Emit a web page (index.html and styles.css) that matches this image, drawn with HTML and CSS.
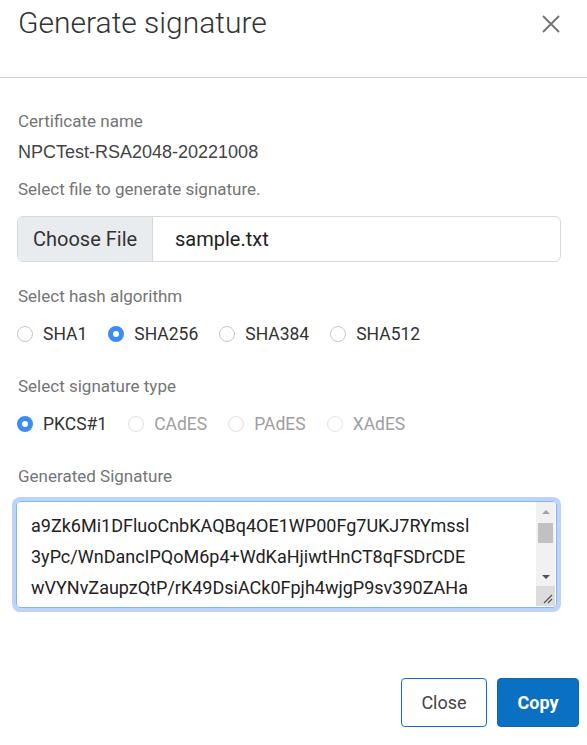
FILE: index.html
```html
<!DOCTYPE html>
<html lang="en">
<head>
    <meta charset="UTF-8">
    <meta name="viewport" content="width=device-width, initial-scale=1.0">
    <title>Generate signature</title>
    <link rel="stylesheet" href="styles.css">
</head>
<body>
    <div class="modal">
        <div class="modal-header">
            <h1 class="modal-title">Generate signature</h1>
            <button type="button" class="btn-close" aria-label="Close">
                <svg width="18" height="18" viewBox="0 0 18 18">
                    <path d="M1 1L17 17M17 1L1 17" stroke="#777" stroke-width="2" fill="none"/>
                </svg>
            </button>
        </div>

        <div class="modal-body">
            <div class="field">
                <div class="field-label">Certificate name</div>
                <div class="cert-name">NPCTest-RSA2048-20221008</div>
            </div>

            <div class="field">
                <label class="field-label" for="file">Select file to generate signature.</label>
                <div class="file-input" id="file">
                    <span class="file-btn">Choose File</span>
                    <span class="file-name">sample.txt</span>
                </div>
            </div>

            <div class="field field-wide">
                <div class="field-label">Select hash algorithm</div>
                <div class="radio-row">
                    <label class="radio"><input type="radio" name="hash" value="SHA1"> SHA1</label>
                    <label class="radio"><input type="radio" name="hash" value="SHA256" checked> SHA256</label>
                    <label class="radio"><input type="radio" name="hash" value="SHA384"> SHA384</label>
                    <label class="radio"><input type="radio" name="hash" value="SHA512"> SHA512</label>
                </div>
            </div>

            <div class="field field-wide">
                <div class="field-label">Select signature type</div>
                <div class="radio-row">
                    <label class="radio"><input type="radio" name="sigtype" value="PKCS1" checked> PKCS#1</label>
                    <label class="radio disabled"><input type="radio" name="sigtype" value="CAdES" disabled> CAdES</label>
                    <label class="radio disabled"><input type="radio" name="sigtype" value="PAdES" disabled> PAdES</label>
                    <label class="radio disabled"><input type="radio" name="sigtype" value="XAdES" disabled> XAdES</label>
                </div>
            </div>

            <div class="field field-wide">
                <label class="field-label" for="signature">Generated Signature</label>
                <div class="signature-wrap">
                    <textarea id="signature" class="signature" readonly>a9Zk6Mi1DFluoCnbKAQBq4OE1WP00Fg7UKJ7RYmssl
3yPc/WnDancIPQoM6p4+WdKaHjiwtHnCT8qFSDrCDE
wVYNvZaupzQtP/rK49DsiACk0Fpjh4wjgP9sv390ZAHa
kuyqtbcpqzgrm+qfnmepqhsgqpcmyhqgnpmqsmgnq
Xb2Jm8Qf0LwT5sHc7Ue1RkN3yPa9GdVz4MiOq6BtEw
Fh8Ls2Kc5Nv0Yp7Rj1Ta9Dw3Gm4Hb6Zx2Qe==</textarea>
                    <!-- scrollbar drawn by hand, the headless browser hides the native one -->
                    <div class="scrollbar">
                        <div class="sb-btn"><span class="arrow-up"></span></div>
                        <div class="sb-track"><div class="sb-thumb"></div></div>
                        <div class="sb-btn"><span class="arrow-down"></span></div>
                        <div class="sb-corner">
                            <svg width="19" height="20" viewBox="0 0 19 20">
                                <path d="M8 17L16 9M12 17L16 13" stroke="#555" stroke-width="1.2" fill="none"/>
                            </svg>
                        </div>
                    </div>
                </div>
            </div>
        </div>

        <div class="modal-footer">
            <button type="button" class="btn btn-outline">Close</button>
            <button type="button" class="btn btn-primary">Copy</button>
        </div>
    </div>
</body>
</html>
```

FILE: styles.css
```css
body {
    margin: 0;
    background-color: #fff;
    font-family: Roboto, "Liberation Sans", sans-serif;
    color: #333;
}

.modal {
    width: 587px;
    height: 745px;
    display: flex;
    flex-direction: column;
}

.modal-header {
    display: flex;
    justify-content: space-between;
    align-items: flex-start;
    padding: 5px 27px 36px 18px;
    border-bottom: 1px solid #d0d0d0;
}

.modal-title {
    margin: 0;
    font-size: 30px;
    font-weight: 300;
    line-height: 36px;
    color: #333;
}

.btn-close {
    background: none;
    border: none;
    padding: 0;
    margin-top: 10px;
    width: 18px;
    height: 18px;
    cursor: pointer;
}

.btn-close svg {
    display: block;
}

.modal-body {
    padding: 31px 26px 0 16px;
    flex: 1;
}

.field {
    margin-bottom: 13px;
}

.field-wide {
    margin-top: 22px;
}

.field-wide + .field-wide {
    margin-top: 28px;
}

.field-label {
    display: block;
    padding-left: 2px;
    font-size: 17px;
    line-height: 24px;
    color: #757575;
}

.cert-name {
    padding-left: 2px;
    margin-top: 7px;
    font-family: "Liberation Sans", Arial, sans-serif;
    font-size: 18px;
    line-height: 24px;
    color: #444;
}

.file-input {
    display: flex;
    margin-top: 15px;
    margin-left: 1px;
    height: 46px;
    border: 1px solid #d6d9dd;
    border-radius: 6px;
    overflow: hidden;
    box-sizing: border-box;
    font-size: 20px;
}

.file-btn {
    display: flex;
    align-items: center;
    padding: 0 0 0 15px;
    width: 135px;
    box-sizing: border-box;
    white-space: nowrap;
    background-color: #e9ecef;
    border-right: 1px solid #d6d9dd;
    color: #333;
}

.file-name {
    display: flex;
    align-items: center;
    padding-left: 22px;
    color: #222;
}

.radio-row {
    display: flex;
    gap: 21px;
    margin-top: 14px;
    padding-left: 1px;
    height: 24px;
}

.radio {
    display: flex;
    align-items: center;
    gap: 10px;
    font-size: 17.5px;
    color: #333;
}

.radio.disabled {
    color: #a0a0a0;
}

.radio input {
    appearance: none;
    -webkit-appearance: none;
    margin: 0;
    width: 16px;
    height: 16px;
    border: 1px solid #c8c8c8;
    border-radius: 50%;
    background-color: #fff;
}

.radio input:checked {
    border: 5px solid #3b8cf6;
}

.radio input:disabled {
    border-color: #e2e2e2;
}

.signature-wrap {
    position: relative;
    margin-top: 13px;
    width: 541px;
    height: 107px;
    border-radius: 4px;
    box-shadow: 0 0 0 4px #bcd4f8;
}

.signature {
    display: block;
    width: 100%;
    height: 100%;
    box-sizing: border-box;
    padding: 8px 22px 0 14px;
    font-family: Roboto, "Liberation Sans", sans-serif;
    font-size: 18px;
    line-height: 31px;
    color: #222;
    border: 1px solid #8ab4f0;
    border-radius: 4px;
    outline: none;
    resize: none;
    overflow: hidden;
    white-space: pre;
}

.scrollbar {
    position: absolute;
    top: 1px;
    right: 2px;
    bottom: 2px;
    width: 19px;
    display: flex;
    flex-direction: column;
    background-color: #f1f1f1;
}

.sb-btn {
    height: 19px;
    display: flex;
    align-items: center;
    justify-content: center;
}

.arrow-up {
    border-left: 4px solid transparent;
    border-right: 4px solid transparent;
    border-bottom: 4px solid #a3a3a3;
}

.arrow-down {
    border-left: 4px solid transparent;
    border-right: 4px solid transparent;
    border-top: 4px solid #505050;
}

.sb-track {
    flex: 1;
    padding: 2px 2px 0;
}

.sb-thumb {
    height: 20px;
    background-color: #c1c1c1;
}

.sb-corner {
    height: 20px;
    background-color: #dcdcdc;
}

.sb-corner svg {
    display: block;
}

.modal-footer {
    display: flex;
    justify-content: flex-end;
    gap: 10px;
    padding: 0 8px 18px 0;
}

.btn {
    height: 49px;
    padding: 0 16px;
    font-family: Roboto, "Liberation Sans", sans-serif;
    font-size: 18px;
    border-radius: 4px;
    cursor: pointer;
}

.btn-outline {
    width: 86px;
    background-color: #fff;
    border: 1px solid #0a70c2;
    color: #444;
}

.btn-primary {
    width: 82px;
    background-color: #0a70c2;
    border: 1px solid #0a6ab8;
    color: #fff;
    font-weight: bold;
}
```
